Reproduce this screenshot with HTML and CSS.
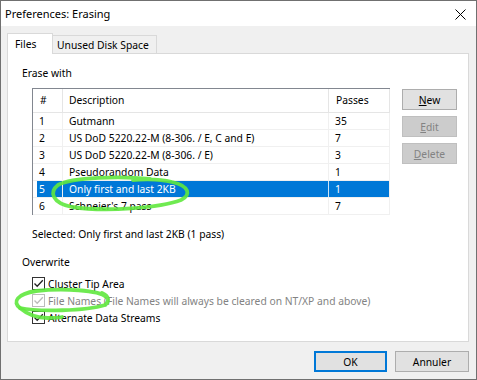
FILE: index.html
```html
<!DOCTYPE html>
<html lang="en">
<head>
  <meta charset="UTF-8" />
  <title>Preferences: Erasing</title>
  <link rel="stylesheet" href="styles.css">
</head>
<body>
  <div class="window">
    <div class="titlebar">
      <span class="title">Preferences: Erasing</span>
      <svg class="close" width="11" height="11" viewBox="0 0 11 11">
        <path d="M0.5 0.5 L10.5 10.5 M10.5 0.5 L0.5 10.5" stroke="#000" stroke-width="1" fill="none"/>
      </svg>
    </div>

    <div class="client">
      <div class="tabs">
        <div class="tab active">Files</div>
        <div class="tab">Unused Disk Space</div>
      </div>

      <div class="panel">
        <div class="group-label">Erase with</div>
        <div class="erase-row">
          <div class="list">
            <div class="row head">
              <div class="c-num">#</div>
              <div class="c-desc">Description</div>
              <div class="c-pass">Passes</div>
            </div>
            <div class="row">
              <div class="c-num">1</div>
              <div class="c-desc">Gutmann</div>
              <div class="c-pass">35</div>
            </div>
            <div class="row">
              <div class="c-num">2</div>
              <div class="c-desc">US DoD 5220.22-M (8-306. / E, C and E)</div>
              <div class="c-pass">7</div>
            </div>
            <div class="row">
              <div class="c-num">3</div>
              <div class="c-desc">US DoD 5220.22-M (8-306. / E)</div>
              <div class="c-pass">3</div>
            </div>
            <div class="row">
              <div class="c-num">4</div>
              <div class="c-desc">Pseudorandom Data</div>
              <div class="c-pass">1</div>
            </div>
            <div class="row selected">
              <div class="c-num">5</div>
              <div class="c-desc">Only first and last 2KB</div>
              <div class="c-pass">1</div>
            </div>
            <div class="row">
              <div class="c-num">6</div>
              <div class="c-desc">Schneier's 7 pass</div>
              <div class="c-pass">7</div>
            </div>
          </div>

          <div class="side-buttons">
            <button class="btn small"><u>N</u>ew</button>
            <button class="btn small" disabled><u>E</u>dit</button>
            <button class="btn small" disabled><u>D</u>elete</button>
          </div>
        </div>

        <div class="selected-text">Selected: Only first and last 2KB (1 pass)</div>

        <div class="group-label overwrite">Overwrite</div>
        <div class="checks">
          <label class="check">
            <span class="box"><svg width="11" height="11" viewBox="0 0 11 11"><path d="M1.5 5.5 L4.2 8.3 L9.8 2.3" stroke="#222" stroke-width="1.3" fill="none"/></svg></span>
            Cluster Tip Area
          </label>
          <label class="check disabled">
            <span class="box"><svg width="11" height="11" viewBox="0 0 11 11"><path d="M1.5 5.5 L4.2 8.3 L9.8 2.3" stroke="#bcbcbc" stroke-width="1.3" fill="none"/></svg></span>
            File Names (File Names will always be cleared on NT/XP and above)
          </label>
          <label class="check">
            <span class="box"><svg width="11" height="11" viewBox="0 0 11 11"><path d="M1.5 5.5 L4.2 8.3 L9.8 2.3" stroke="#222" stroke-width="1.3" fill="none"/></svg></span>
            Alternate Data Streams
          </label>
        </div>
      </div>

      <div class="footer">
        <button class="btn dialog default">OK</button>
        <button class="btn dialog">Annuler</button>
      </div>
    </div>

    <!-- hand-drawn highlight marks -->
    <svg class="marks" width="477" height="380" viewBox="0 0 477 380">
      <path d="M150 179 C 122 176, 72 177, 58 185 C 49 192, 52 203, 72 207 C 105 212, 160 208, 181 200 C 191 195, 190 186, 172 182 C 160 179, 146 179, 133 180" />
      <path d="M106 297 C 100 290, 62 288, 36 291 C 17 294, 12 302, 20 308 C 38 312, 86 311, 105 305 C 110 301, 109 296, 102 293" />
      <path d="M20 308 C 27 314, 36 318, 48 318 C 54 318, 58 318, 62 317" />
    </svg>
  </div>
</body>
</html>
```

FILE: styles.css
```css
body {
  margin: 0;
  font-family: 'Noto Sans', 'Open Sans', sans-serif;
  font-size: 10.3px;
  color: #000;
}

.window {
  position: relative;
  width: 477px;
  height: 380px;
  box-sizing: border-box;
  border: 1px solid #707070;
  background: #f0f0f0;
  display: flex;
  flex-direction: column;
}

.titlebar {
  height: 25px;
  background: #fff;
  display: flex;
  align-items: center;
  justify-content: space-between;
  padding: 0 10px 0 4px;
  flex-shrink: 0;
}

.title {
  font-size: 11px;
  line-height: 16px;
  margin-top: 1px;
}

.close {
  display: block;
  margin-top: 1px;
}

.client {
  flex: 1;
  padding: 7px 7px 0 6px;
  display: flex;
  flex-direction: column;
}

/* Tabs */
.tabs {
  display: flex;
  align-items: flex-end;
  height: 20px;
}

.tab {
  box-sizing: border-box;
  height: 18px;
  border: 1px solid #d9d9d9;
  border-bottom: 0;
  background: #f0f0f0;
  line-height: 16px;
  padding: 1px 0 0 4px;
  width: 105px;
  margin-left: -1px;
  white-space: nowrap;
}

.tab.active {
  position: relative;
  z-index: 1;
  height: 21px;
  width: 46px;
  margin-left: 0;
  margin-bottom: -1px;
  background: #fff;
  padding: 2px 0 0 7px;
}

/* Tab page */
.panel {
  box-sizing: border-box;
  height: 289px;
  border: 1px solid #d9d9d9;
  background: #fff;
  padding: 11px 0 0 14px;
}

.group-label {
  line-height: 16px;
}

.group-label.overwrite {
  margin-top: 12px;
}

.erase-row {
  display: flex;
  align-items: flex-start;
  margin: 7px 0 0 10px;
}

.list {
  width: 358px;
  box-sizing: border-box;
  border-top: 1px solid #828790;
  border-left: 1px solid #828790;
}

.row {
  display: flex;
  height: 17px;
  box-sizing: border-box;
  border-bottom: 1px solid #f0f0f0;
  line-height: 16px;
}

.row > div {
  box-sizing: border-box;
  padding-left: 6px;
  border-right: 1px solid #f0f0f0;
  white-space: nowrap;
  overflow: hidden;
}

.c-num { width: 30px; }
.c-desc { width: 266px; }
.c-pass { width: 61px; }

.row.head {
  height: 24px;
  border-bottom-color: #e5e5e5;
  line-height: 22px;
}

.row.head > div {
  border-right-color: #e5e5e5;
  padding-left: 7px;
}

.row.head .c-desc { padding-left: 6px; }

.row.selected > div {
  background: #0078d7;
  color: #fff;
}

.row.selected .c-num {
  background: linear-gradient(to right, #fff 4px, #0078d7 4px);
}

.row.selected .c-desc {
  border-right-color: #cce4f7;
}

/* Buttons */
.btn {
  font-family: inherit;
  font-size: 10.3px;
  color: #000;
  background: #e1e1e1;
  border: 1px solid #adadad;
  padding: 0;
  box-sizing: border-box;
  line-height: 16px;
}

.btn:disabled {
  background: #cccccc;
  border-color: #bfbfbf;
  color: #838383;
}

.side-buttons {
  display: flex;
  flex-direction: column;
  gap: 6px;
  margin: 1px 0 0 12px;
}

.btn.small {
  width: 55px;
  height: 21px;
}

.selected-text {
  margin: 11px 0 0 10px;
  line-height: 16px;
}

/* Checkboxes */
.checks {
  margin: 5px 0 0 10px;
}

.check {
  display: flex;
  align-items: center;
  height: 17px;
  gap: 3px;
}

.box {
  box-sizing: border-box;
  width: 13px;
  height: 13px;
  border: 1px solid #333;
  background: #fff;
  display: flex;
}

.check.disabled {
  color: #838383;
}

.check.disabled .box {
  border-color: #bcbcbc;
}

/* Dialog buttons */
.footer {
  display: flex;
  justify-content: flex-end;
  gap: 8px;
  padding-top: 9px;
}

.btn.dialog {
  width: 74px;
  height: 21px;
}

.btn.default {
  width: 73px;
  border: 2px solid #0078d7;
}

.marks {
  position: absolute;
  left: -1px;
  top: -1px;
  pointer-events: none;
}

.marks path {
  fill: none;
  stroke: #5fe83e;
  stroke-width: 3.8;
  stroke-linecap: round;
  stroke-linejoin: round;
  opacity: 0.9;
}
```
